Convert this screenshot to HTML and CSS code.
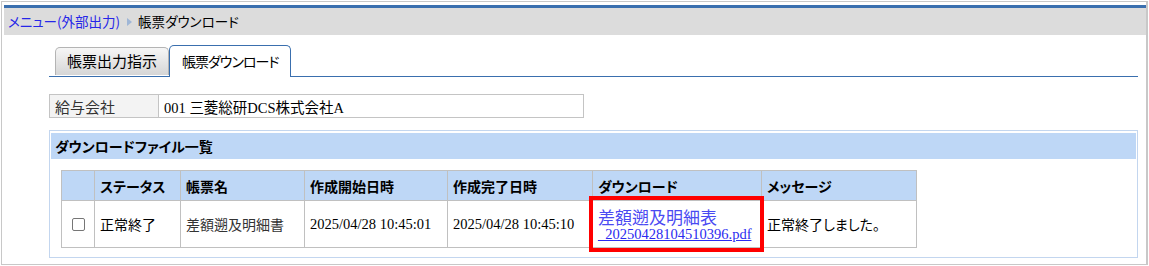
FILE: index.html
```html
<!DOCTYPE html>
<html lang="ja">
<head>
    <meta charset="UTF-8">
    <meta name="viewport" content="width=device-width, initial-scale=1.0">
    <title>帳票ダウンロード</title>
    <link rel="stylesheet" href="styles.css">
</head>
<body>
    <div class="frame">
        <div class="breadcrumb">
            <a href="#" class="crumb-link">メニュー(外部出力)</a>
            <span class="crumb-arrow"></span>
            <span class="crumb-current">帳票ダウンロード</span>
        </div>
        <div class="content">
            <div class="tabs">
                <a href="#" class="tab">帳票出力指示</a>
                <a href="#" class="tab active">帳票ダウンロード</a>
            </div>
            <table class="fields">
                <tr>
                    <th>給与会社</th>
                    <td>001 三菱総研DCS株式会社A</td>
                </tr>
            </table>
            <div class="panel">
                <div class="panel-title">ダウンロードファイル一覧</div>
                <table class="list">
                    <colgroup>
                        <col class="c-check">
                        <col class="c-status">
                        <col class="c-name">
                        <col class="c-start">
                        <col class="c-end">
                        <col class="c-download">
                        <col class="c-message">
                    </colgroup>
                    <tr class="head">
                        <th></th>
                        <th>ステータス</th>
                        <th>帳票名</th>
                        <th>作成開始日時</th>
                        <th>作成完了日時</th>
                        <th>ダウンロード</th>
                        <th>メッセージ</th>
                    </tr>
                    <tr class="row">
                        <td class="check"><span class="checkbox"></span></td>
                        <td>正常終了</td>
                        <td class="name">差額遡及明細書</td>
                        <td class="date">2025/04/28 10:45:01</td>
                        <td class="date">2025/04/28 10:45:10</td>
                        <td class="download">
                            <a href="#" class="file-link"><span class="file-title">差額遡及明細表</span><span class="file-rest">_20250428104510396.pdf</span></a>
                            <div class="highlight"></div>
                        </td>
                        <td>正常終了しました。</td>
                    </tr>
                </table>
            </div>
        </div>
    </div>
</body>
</html>
```

FILE: styles.css
```css
body {
    margin: 0;
    padding: 1px 0 0 1px;
    background: #ffffff;
    font-family: "Noto Sans CJK JP", sans-serif;
    font-feature-settings: "palt";
    font-size: 14px;
    color: #000;
}
.frame {
    box-sizing: border-box;
    width: 1147px;
    height: 264px;
    border: 1px solid #c8c8c8;
    border-right-width: 2px;
    padding: 3px 0 0 2px;
}
.breadcrumb {
    border-top: 3px solid #3a6fae;
    background: #dcdcdc;
    height: 27px;
    line-height: 27px;
    padding-left: 4px;
    display: flex;
    align-items: center;
    white-space: nowrap;
    font-size: 13.5px;
}
.crumb-link {
    color: #2626e8;
    text-decoration: none;
}
.crumb-arrow {
    width: 0;
    height: 0;
    border-top: 4px solid transparent;
    border-bottom: 4px solid transparent;
    border-left: 5px solid #9fb6d6;
    margin: 0 6px 0 7px;
}
.content {
    padding: 10px 8px 0 45px;
}
.tabs {
    display: flex;
    align-items: flex-end;
    height: 31px;
    padding-left: 6px;
    border-bottom: 1px solid #3a6fae;
}
.tab {
    box-sizing: border-box;
    height: 28px;
    line-height: 26px;
    padding: 0 11px;
    border: 1px solid #b4b4b4;
    border-bottom: none;
    border-radius: 5px 5px 0 0;
    background: linear-gradient(#f6f6f6, #d6d6d6);
    color: #000;
    text-decoration: none;
    font-size: 15px;
    margin-bottom: 1px;
}
.tab.active {
    height: 32px;
    line-height: 30px;
    padding: 0 12px;
    background: #fff;
    border-color: #3a6fae;
    margin-bottom: -1px;
    font-size: 14px;
    letter-spacing: -1px;
}
.fields {
    margin-top: 17px;
    border-collapse: collapse;
    width: 535px;
}
.fields th, .fields td {
    border: 1px solid #c4c4c4;
    height: 22px;
    padding: 0 5px;
    text-align: left;
    font-weight: normal;
}
.fields th {
    width: 98px;
    background: #f3f3f3;
    color: #333;
    font-size: 15px;
}
.fields td {
    font-family: "Liberation Serif", "Noto Sans CJK JP", serif;
    font-size: 14.5px;
}
.panel {
    margin-top: 12px;
    border: 1px solid #c3d6ef;
    padding: 2px 1px 10px 1px;
    height: 114px;
}
.panel-title {
    background: #bed7f6;
    height: 26px;
    line-height: 26px;
    padding-left: 4px;
    font-weight: bold;
}
.list {
    margin: 11px 0 0 10px;
    border-collapse: collapse;
    table-layout: fixed;
    width: 855px;
}
.c-check { width: 33px; }
.c-status { width: 86px; }
.c-name { width: 124px; }
.c-start { width: 143px; }
.c-end { width: 145px; }
.c-download { width: 169px; }
.c-message { width: 155px; }
.list th, .list td {
    border: 1px solid #c0c0c0;
    padding: 0 5px;
    text-align: left;
}
.list .head th {
    background: #bed7f6;
    height: 29px;
    font-weight: bold;
}
.list .row td {
    height: 46px;
}
.list .check {
    padding: 0 0 0 10px;
}
.checkbox {
    display: block;
    box-sizing: border-box;
    width: 13px;
    height: 13px;
    border: 1px solid #767676;
    border-radius: 2px;
}
.list .name {
    color: #333;
}
.list .date {
    font-family: "Liberation Serif", serif;
    font-size: 14.5px;
}
.list .download {
    position: relative;
}
.file-link {
    color: #2b2bf0;
    text-decoration: none;
}
.file-title {
    display: block;
    font-size: 17px;
    line-height: 19px;
    color: #4a4af2;
}
.file-rest {
    display: block;
    font-family: "Liberation Serif", serif;
    font-size: 14.5px;
    line-height: 16px;
    text-decoration: underline;
}
.highlight {
    position: absolute;
    top: -5px;
    left: -4px;
    right: -3px;
    bottom: -5px;
    border: 4px solid #ff0000;
}
```
